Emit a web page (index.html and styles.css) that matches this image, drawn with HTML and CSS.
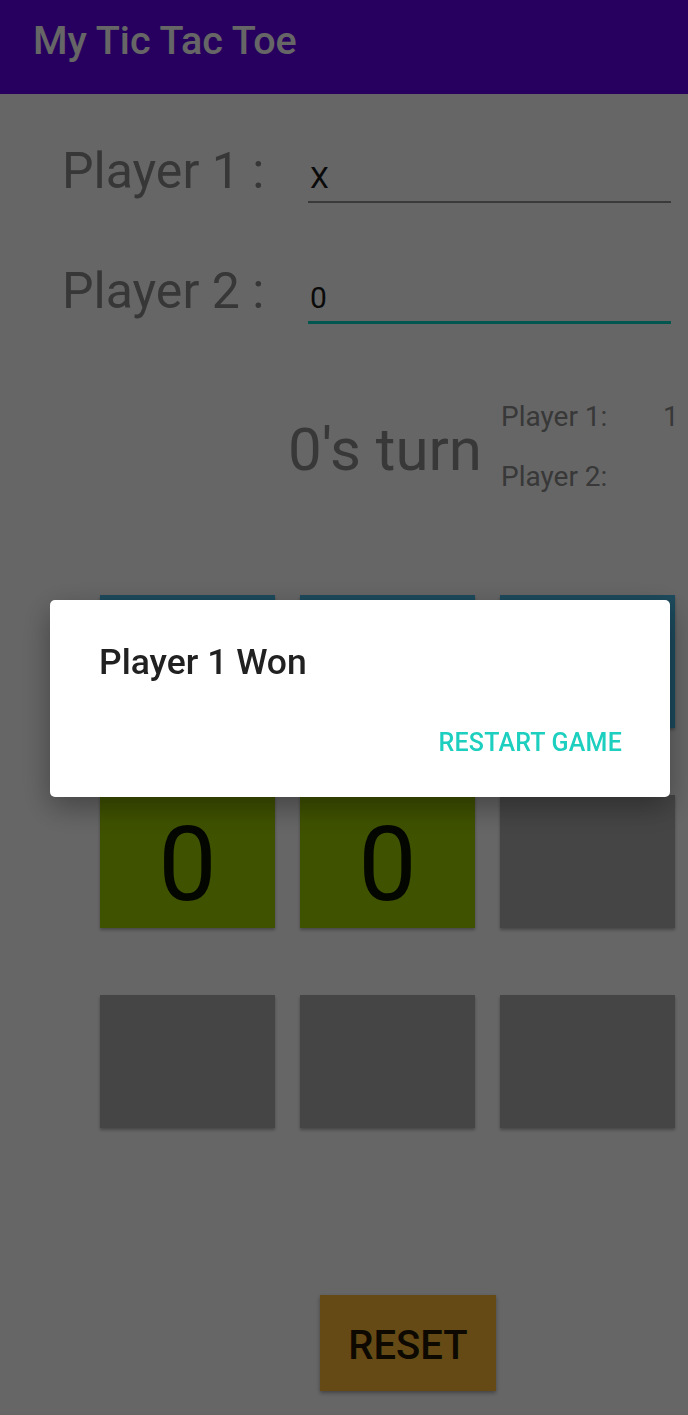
FILE: index.html
```html
<!DOCTYPE html>
<html lang="en">
<head>
<meta charset="utf-8">
<title>My Tic Tac Toe</title>
<link rel="stylesheet" href="styles.css">
</head>
<body>
<header class="appbar"><h1 class="appbar-title">My Tic Tac Toe</h1></header>
<main class="screen">
  <section class="players">
    <div class="player-row">
      <label class="player-label">Player 1 :</label>
      <div class="field">X</div>
    </div>
    <div class="player-row">
      <label class="player-label">Player 2 :</label>
      <div class="field field-focused">0</div>
    </div>
  </section>
  <section class="status">
    <div class="turn">0's turn</div>
    <div class="scores">
      <span class="score-label">Player 1:</span><span class="score-value">1</span>
      <span class="score-label">Player 2:</span><span class="score-value"></span>
    </div>
  </section>
  <section class="board">
    <div class="cell cell-blue"></div>
    <div class="cell cell-blue"></div>
    <div class="cell cell-blue"></div>
    <div class="cell cell-green">0</div>
    <div class="cell cell-green">0</div>
    <div class="cell"></div>
    <div class="cell"></div>
    <div class="cell"></div>
    <div class="cell"></div>
  </section>
  <div class="reset-wrap"><button class="reset">RESET</button></div>
</main>
<div class="scrim"></div>
<div class="dialog">
  <div class="dialog-title">Player 1 Won</div>
  <div class="dialog-actions"><span class="dialog-button">RESTART GAME</span></div>
</div>
</body>
</html>
```
FILE: styles.css
```css
* { box-sizing: border-box; }
html, body {
  margin: 0;
  padding: 0;
  width: 688px;
  height: 1415px;
  overflow: hidden;
  background: #ffffff;
  font-family: Roboto, "Liberation Sans", sans-serif;
}
.appbar {
  height: 94px;
  background: #6200ee;
  padding: 21px 0 0 33px;
}
.appbar-title {
  margin: 0;
  font-size: 39.5px;
  line-height: 40px;
  font-weight: 500;
  color: #ffffff;
}
.players {
  padding: 47px 17px 0 62px;
}
.player-row {
  height: 120px;
  display: flex;
  align-items: baseline;
}
.player-label {
  width: 246px;
  font-size: 50px;
  line-height: 60px;
  color: #8a8a8a;
}
.field {
  flex: 1;
  font-size: 30px;
  line-height: 40px;
  color: #1a1a1a;
  padding: 0 0 3px 2px;
  border-bottom: 2px solid #919191;
}
.field-focused {
  border-bottom: 3px solid #03dac5;
  padding-bottom: 3px;
}
.status {
  margin-top: 6px;
  display: flex;
  justify-content: flex-end;
  align-items: center;
}
.turn {
  font-size: 60px;
  line-height: 80px;
  color: #8c8c8c;
  margin-right: 19px;
  padding-top: 6px;
}
.scores {
  width: 187px;
  display: grid;
  grid-template-columns: 162px 1fr;
  font-size: 28px;
  line-height: 60px;
  color: #8c8c8c;
}
.board {
  margin: 88px 0 0 100px;
  display: grid;
  grid-template-columns: repeat(3, 175px);
  grid-auto-rows: 133px;
  column-gap: 25px;
  row-gap: 67px;
}
.cell {
  background: #adadad;
  box-shadow: 0 2px 3px rgba(0, 0, 0, 0.3);
  display: flex;
  align-items: center;
  justify-content: center;
  font-size: 104px;
  line-height: 1;
  color: #0a1000;
  padding-top: 6px;
}
.cell-blue { background: #46b9e8; }
.cell-green { background: #9ecd00; }
.reset-wrap {
  margin: 167px 0 0 320px;
}
.reset {
  width: 176px;
  height: 96px;
  border: none;
  background: #fdb937;
  box-shadow: 0 2px 4px rgba(0, 0, 0, 0.35);
  font-family: Roboto, "Liberation Sans", sans-serif;
  font-size: 40px;
  font-weight: 500;
  color: #211800;
  padding: 4px 0 0;
}
.scrim {
  position: fixed;
  inset: 0;
  background: rgba(0, 0, 0, 0.6);
}
.dialog {
  position: fixed;
  left: 50px;
  top: 600px;
  width: 620px;
  height: 197px;
  background: #ffffff;
  border-radius: 5px;
  box-shadow: 0 10px 30px rgba(0, 0, 0, 0.35);
  padding: 42px 48px 0 49px;
  display: flex;
  flex-direction: column;
}
.dialog-title {
  font-size: 35.5px;
  line-height: 41px;
  font-weight: 500;
  color: #212121;
}
.dialog-actions {
  margin-top: 45px;
  display: flex;
  justify-content: flex-end;
}
.dialog-button {
  font-size: 25px;
  line-height: 30px;
  font-weight: 500;
  letter-spacing: 0.2px;
  color: #1ccfbf;
}
```
